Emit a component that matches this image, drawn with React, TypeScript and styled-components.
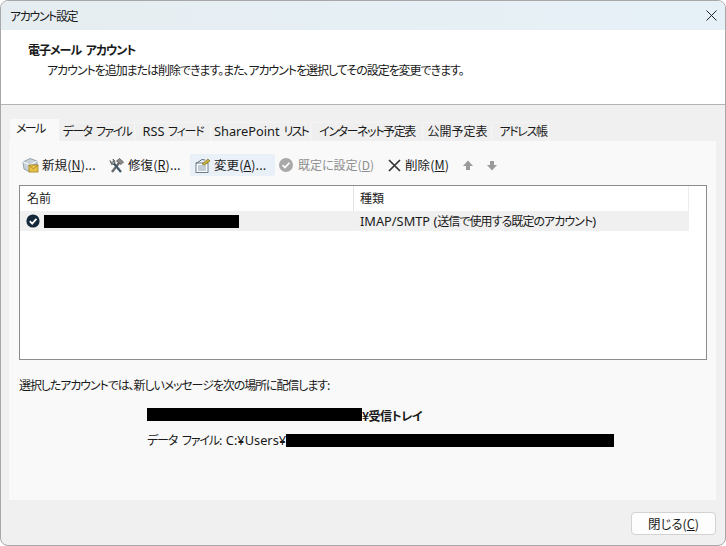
import React from "react";
import styled, { createGlobalStyle } from "styled-components";

const Global = createGlobalStyle`
  html, body { margin: 0; padding: 0; background: #fff; }
  body { font-family: "Noto Sans CJK JP", "Noto Sans", sans-serif; font-size: 12px; color: #1a1a1a; }
  * { box-sizing: border-box; }
`;

const Window = styled.div`
  width: 726px; height: 546px; display: flex; flex-direction: column;
  background: #f0f0f0; border: 1px solid #a8a8a8; border-radius: 8px; overflow: hidden;
`;
const TitleBar = styled.div`
  height: 29px; flex: none; display: flex; align-items: center; justify-content: space-between;
  padding: 0 8px 0 9px; background: linear-gradient(90deg, #e6edf1, #e6f1f7);
`;
const Txt = styled.span<{ $ls?: number; $ws?: number; $size?: number; $bold?: boolean; $gray?: boolean }>`
  font-feature-settings: "palt";
  white-space: nowrap;
  line-height: 16px;
  display: inline-block;
  letter-spacing: ${p => p.$ls ?? 0}px;
  word-spacing: ${p => p.$ws ?? 0}px;
  ${p => p.$size ? `font-size:${p.$size}px;` : ""}
  ${p => p.$bold ? "font-weight:700;" : ""}
  ${p => p.$gray ? "color:#8e8e8e;" : ""}
`;
const Latin = styled.span`
  font-family: "Noto Sans", sans-serif;
  font-size: 12.8px;
  letter-spacing: 0;
`;
const Header = styled.div`
  height: 75px; flex: none; background: #fff; border-bottom: 1px solid #b4b4b4;
  padding: 12px 0 0 27px; display: flex; flex-direction: column; gap: 4px;
`;
const SubText = styled(Txt)`
  margin-left: 19px;
`;
const Body = styled.div`
  flex: 1; padding: 14px 9px 0 8px; display: flex; flex-direction: column;
`;
const TabRow = styled.div`
  height: 22px; display: flex; align-items: flex-end; padding-left: 1px; gap: 1px; flex: none;
`;
const Tab = styled.div<{ $w: number; $active?: boolean; $shift?: number }>`
  width: ${p => p.$w}px; height: ${p => p.$active ? 22 : 19}px; flex: none;
  display: flex; align-items: center; justify-content: center;
  padding-bottom: 2px;
  padding-left: ${p => p.$shift ?? 0}px;
  background: ${p => p.$active ? "#f9f9f9" : "#efefef"};
  ${p => p.$active ? "" : "border-right: 1px solid #f6f6f6; border-top: 1px solid #f3f3f3;"}
  ${p => p.$active ? "padding-bottom: 4px; justify-content: flex-start; padding-left: 6px;" : ""}
`;
const Panel = styled.div`
  height: 359px; flex: none; background: #f9f9f9; padding: 13px 8px 0 10px;
  display: flex; flex-direction: column;
`;
const Toolbar = styled.div`
  height: 22px; display: flex; align-items: center; flex: none; margin-bottom: 9px;
`;
const ToolButton = styled.div<{ $w: number; $hover?: boolean; $pad?: number; $gap?: number }>`
  width: ${p => p.$w}px; height: 22px; display: flex; align-items: center; gap: ${p => p.$gap ?? 4}px; flex: none;
  padding-left: ${p => p.$pad ?? 3}px; border-radius: 2px;
  ${p => p.$hover ? "background: #e9f0f7;" : ""}
  u { text-underline-offset: 1px; }
`;
const ListBox = styled.div`
  height: 175px; flex: none; width: 688px; background: #fff; border: 1px solid #8c8c8c;
`;
const ListHead = styled.div`
  height: 25px; width: 669px; display: grid; grid-template-columns: 334px 1fr; border-right: 1px solid #ececec;
`;
const HeadCell = styled.div`
  padding: 3px 0 0 7px; border-right: 1px solid #e4e4e4;
  &:last-child { border-right: 0; padding-left: 6px; }
`;
const ListRow = styled.div`
  height: 20px; width: 669px; background: #f0f0f0; display: grid; grid-template-columns: 334px 1fr; align-items: center;
`;
const NameCell = styled.div`
  display: flex; align-items: center; padding-left: 6px; gap: 4px;
`;
const TypeCell = styled.div`
  padding-left: 6px; display: flex; align-items: center;
`;
const Redact = styled.span<{ $w: number; $h?: number }>`
  display: inline-block; flex: none; width: ${p => p.$w}px; height: ${p => p.$h ?? 13}px; background: #000;
`;
const Note = styled.div`
  margin-top: 16px; height: 16px;
`;
const Store = styled.div`
  margin: 12px 0 0 128px; display: flex; flex-direction: column; gap: 6px;
`;
const StoreLine = styled.div`
  height: 20px; display: flex; align-items: center;
`;
const Inbox = styled(Txt)`
  margin-top: 4px;
`;
const Footer = styled.div`
  flex: 1; display: flex; justify-content: flex-end; padding: 12px 0 0 0;
`;
const CloseButton = styled.button`
  width: 85px; height: 23px; background: #fdfdfd; border: 1px solid #d2d2d2; border-radius: 4px;
  font: inherit; color: inherit; padding: 0; display: flex; align-items: center; justify-content: center;
`;

const NewIcon = () => (
  <svg width="17" height="17" viewBox="0 0 17 17">
    <path d="M1 5 L8 1.5 L15 4 L15 8 L8 8 L8 15 L2 12 Z" fill="#c8d2d8" stroke="#7f8f99" strokeWidth=".8" />
    <path d="M1 5 L8 8 L15 4" fill="none" stroke="#fff" strokeWidth="1" />
    <rect x="7" y="8" width="9" height="7" fill="#e9c24a" stroke="#a17d1c" strokeWidth=".8" />
    <path d="M7 8 L11.5 12 L16 8" fill="none" stroke="#a17d1c" strokeWidth=".8" />
  </svg>
);
const RepairIcon = () => (
  <svg width="17" height="17" viewBox="0 0 17 17">
    <path d="M4 15 L11 6" stroke="#6b6b6b" strokeWidth="2.4" />
    <path d="M8.5 4 L11.5 1.5 L15.5 5 L13 7.5 Z" fill="#8c8c8c" stroke="#444" strokeWidth=".7" />
    <path d="M13 15 L5.5 6" stroke="#3f5566" strokeWidth="2.2" />
    <path d="M2 3.5 L3.5 5.5 L5.5 4.5 L5 2 L7 4 L6.5 7 L3.5 7.5 Z" fill="#9aa5ac" stroke="#444" strokeWidth=".7" />
  </svg>
);
const ChangeIcon = () => (
  <svg width="17" height="17" viewBox="0 0 17 17">
    <rect x="2" y="6" width="12" height="9.5" fill="#fdfdfd" stroke="#5d6f80" strokeWidth=".9" />
    <path d="M4 9h8M4 11h8M4 13h8" stroke="#7d93a8" strokeWidth=".9" />
    <path d="M2 6.5 L8 2.5 L11 3" fill="none" stroke="#5d6f80" strokeWidth="1" />
    <path d="M8 7 L14 2 L16 4 L10.5 8 Z" fill="#c9b23c" stroke="#7e7320" strokeWidth=".7" />
  </svg>
);
const DefaultIcon = () => (
  <svg width="16" height="16" viewBox="0 0 16 16">
    <circle cx="8" cy="8" r="7" fill="#a9a9a9" />
    <path d="M4.6 8.2 L7 10.6 L11.4 5.8" fill="none" stroke="#fff" strokeWidth="1.7" />
  </svg>
);
const DeleteIcon = () => (
  <svg width="15" height="15" viewBox="0 0 15 15">
    <path d="M2 2 L13 13 M13 2 L2 13" stroke="#333" strokeWidth="1.7" />
  </svg>
);
const Arrow = ({ down }: { down?: boolean }) => (
  <svg width="10" height="11" viewBox="0 0 10 11">
    <path d={down ? "M3 1 H7 V5 H10 L5 10.5 L0 5 H3 Z" : "M5 .5 L10 6 H7 V10 H3 V6 H0 Z"} fill="#9a9a9a" />
  </svg>
);
const RowCheck = () => (
  <svg width="14" height="14" viewBox="0 0 14 14">
    <circle cx="7" cy="7" r="6.6" fill="#14283a" />
    <path d="M3.8 7.2 L6.2 9.6 L10.4 4.8" fill="none" stroke="#fff" strokeWidth="1.8" />
  </svg>
);
const CloseGlyph = () => (
  <svg width="11" height="11" viewBox="0 0 11 11">
    <path d="M.5 .5 L10.5 10.5 M10.5 .5 L.5 10.5" stroke="#222" strokeWidth="1" />
  </svg>
);

export default function App() {
  return (
    <>
      <Global />
      <Window>
        <TitleBar>
          <Txt $ls={-1.4}>アカウント設定</Txt>
          <CloseGlyph />
        </TitleBar>
        <Header>
          <Txt $bold $ls={-1} $ws={3}>電子メール アカウント</Txt>
          <SubText $ls={-1.05}>アカウントを追加または削除できます。また、アカウントを選択してその設定を変更できます。</SubText>
        </Header>
        <Body>
          <TabRow>
            <Tab $w={49} $active><Txt $ls={-1.6}>メール</Txt></Tab>
            <Tab $w={75}><Txt $ls={-1.5} $ws={3}>データ ファイル</Txt></Tab>
            <Tab $w={75}><Txt $ls={-1.2} $ws={2}><Latin>RSS</Latin> フィード</Txt></Tab>
            <Tab $w={99}><Txt $ls={-1.8} $ws={3}><Latin>SharePoint</Latin> リスト</Txt></Tab>
            <Tab $w={111}><Txt $ls={-1.4}>インターネット予定表</Txt></Tab>
            <Tab $w={68}><Txt>公開予定表</Txt></Tab>
            <Tab $w={56} $shift={5}><Txt $ls={-1.4}>アドレス帳</Txt></Tab>
          </TabRow>
          <Panel>
            <Toolbar>
              <ToolButton $w={86} $gap={3}><NewIcon /><Txt $size={12.5} $ls={0.1}>新規(<u>N</u>)...</Txt></ToolButton>
              <ToolButton $w={85} $gap={3}><RepairIcon /><Txt $size={12.5} $ls={0.1}>修復(<u>R</u>)...</Txt></ToolButton>
              <ToolButton $w={85} $hover $pad={4} $gap={3}><ChangeIcon /><Txt $size={12.5} $ls={0.1}>変更(<u>A</u>)...</Txt></ToolButton>
              <ToolButton $w={109}><DefaultIcon /><Txt $gray>既定に設定(<u>D</u>)</Txt></ToolButton>
              <ToolButton $w={76} $gap={3}><DeleteIcon /><Txt $size={12.5} $ls={0.1}>削除(<u>M</u>)</Txt></ToolButton>
              <ToolButton $w={24}><Arrow /></ToolButton>
              <ToolButton $w={24}><Arrow down /></ToolButton>
            </Toolbar>
            <ListBox>
              <ListHead>
                <HeadCell><Txt>名前</Txt></HeadCell>
                <HeadCell><Txt>種類</Txt></HeadCell>
              </ListHead>
              <ListRow>
                <NameCell><RowCheck /><Redact $w={195} /></NameCell>
                <TypeCell><Txt $ls={-0.95}><Latin>IMAP/SMTP (</Latin>送信で使用する既定のアカウント<Latin>)</Latin></Txt></TypeCell>
              </ListRow>
            </ListBox>
            <Note><Txt $ls={-1.1}>選択したアカウントでは、新しいメッセージを次の場所に配信します:</Txt></Note>
            <Store>
              <StoreLine><Redact $w={215} /><Inbox $bold $ls={-0.5}>¥受信トレイ</Inbox></StoreLine>
              <StoreLine><Txt $ls={-1.1} $ws={3}>データ ファイル: <Latin>C:¥Users¥</Latin></Txt><Redact $w={328} /></StoreLine>
            </Store>
          </Panel>
          <Footer>
            <CloseButton><Txt $size={12.5}>閉じる(<u>C</u>)</Txt></CloseButton>
          </Footer>
        </Body>
      </Window>
    </>
  );
}
